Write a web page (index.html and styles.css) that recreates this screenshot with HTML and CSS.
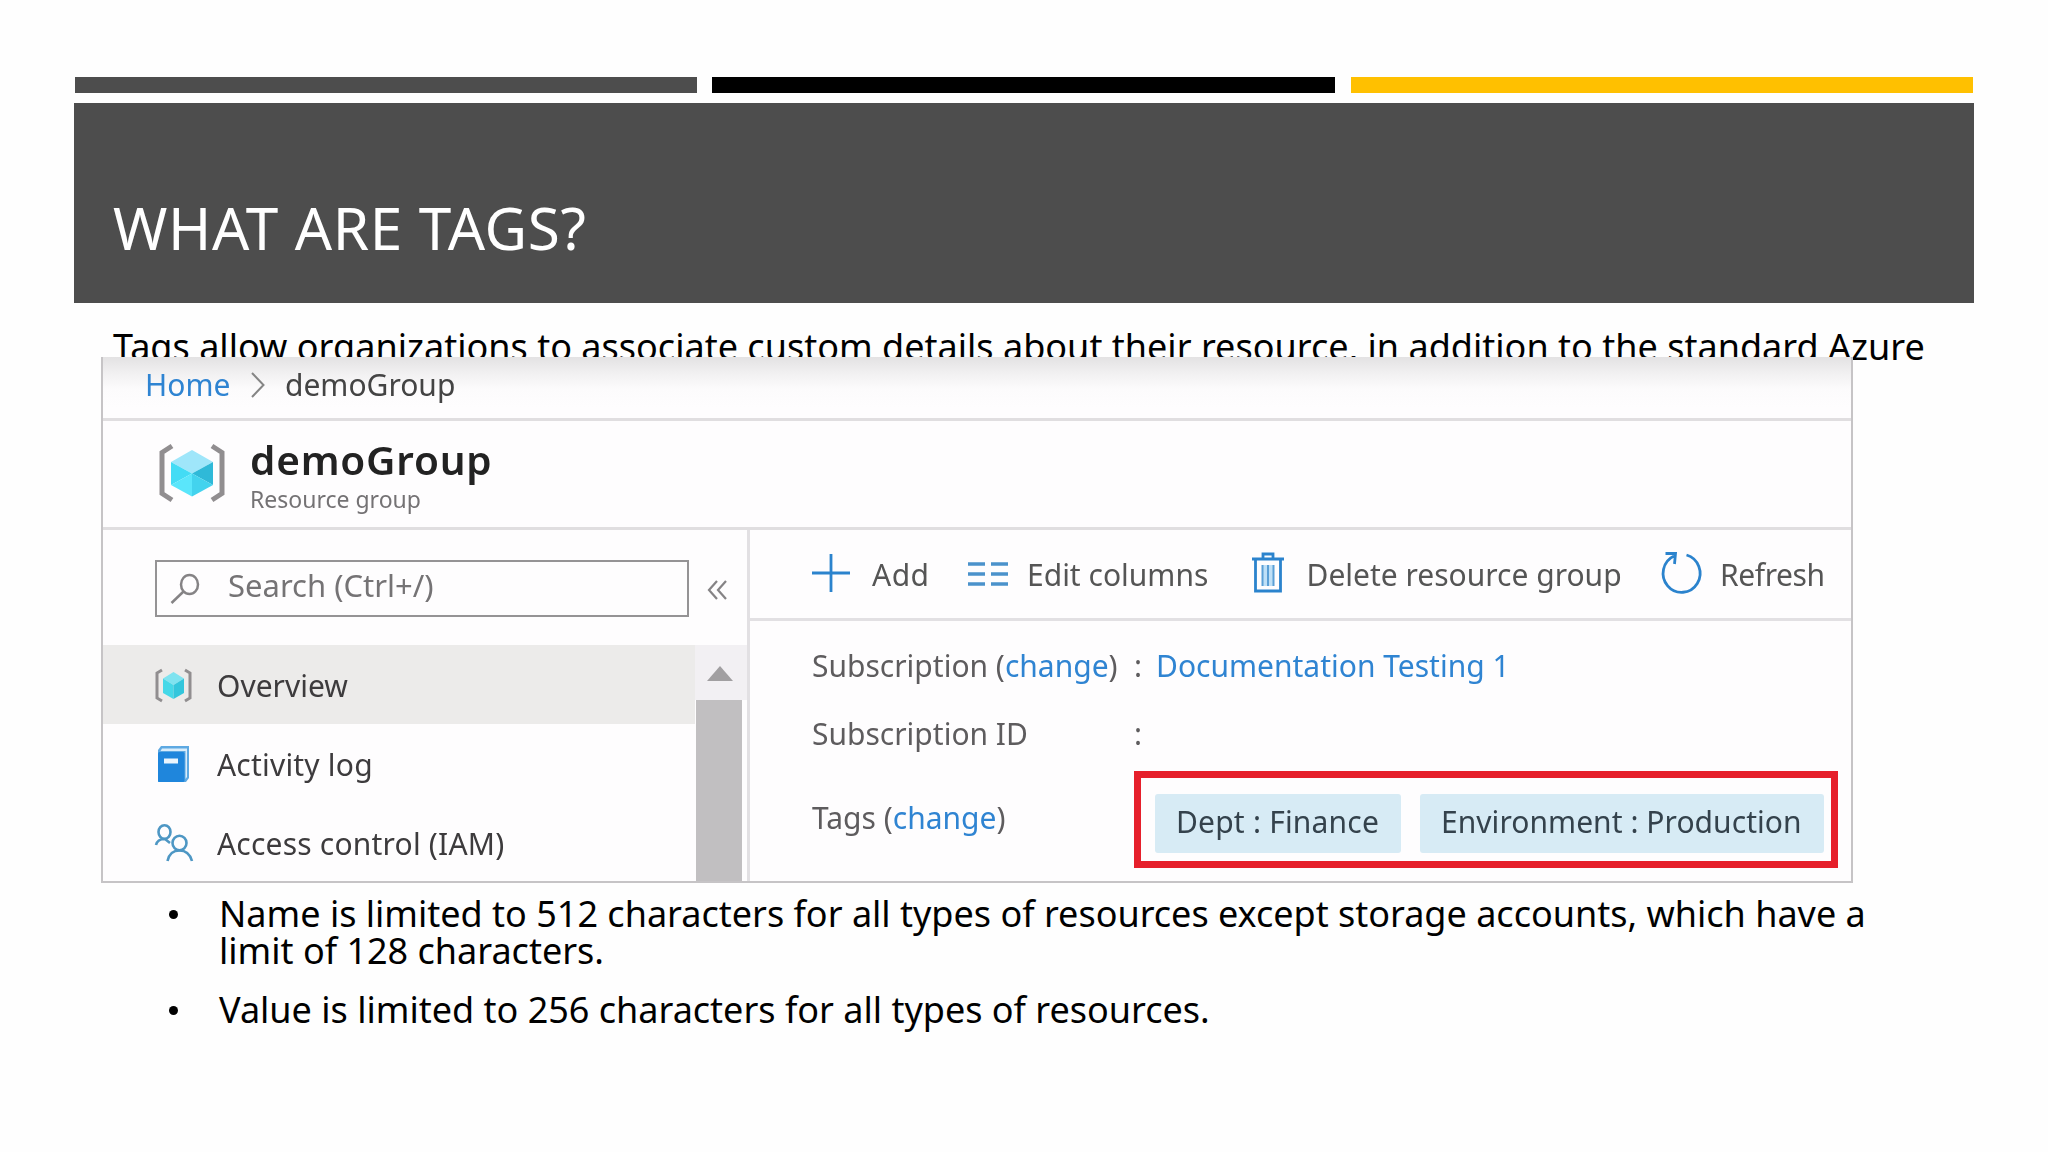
FILE: index.html
```html
<!DOCTYPE html>
<html lang="en">
<head>
<meta charset="utf-8">
<title>What are tags?</title>
<link rel="stylesheet" href="styles.css">
</head>
<body>
<main class="slide">
  <div class="bars"><span class="bar bar-gray"></span><span class="bar bar-black"></span><span class="bar bar-gold"></span></div>
  <header class="banner"><h1 class="title">WHAT ARE TAGS?</h1></header>
  <p class="intro">Tags allow organizations to associate custom details about their resource, in addition to the standard Azure</p>

  <section class="portal">
    <nav class="crumbs">
      <a class="link soft">Home</a>
      <svg class="chevron soft" viewBox="0 0 16 26"><path d="M2 1 13.500 13 2 25"/></svg>
      <span class="soft">demoGroup</span>
    </nav>

    <div class="heading">
      <svg class="group-icon soft" viewBox="0 0 68 60">
        <path class="bracket" d="M14 3 4 9.500V50.500L14 57M54 3 64 9.500V50.500L54 57"/>
        <path fill="#9fe6fa" d="M34 7 55 19 34 30.500 13 19Z"/>
        <path fill="#43dcf5" d="M13 19 34 30.500 13 42Z"/>
        <path fill="#2fb9d8" d="M55 19 34 30.500 55 42Z"/>
        <path fill="#5ae6fb" d="M13 42 34 30.500V53.500Z"/>
        <path fill="#43d3ee" d="M55 42 34 30.500V53.500Z"/>
      </svg>
      <div class="heading-text">
        <h2 class="name soft">demoGroup</h2>
        <div class="kind soft">Resource group</div>
      </div>
    </div>

    <div class="body">
      <aside class="side">
        <div class="search-row">
          <div class="search">
            <svg class="lens soft" viewBox="0 0 30 32"><ellipse cx="19.500" cy="11.500" rx="8.500" ry="9.500"/><path d="M13.500 18.500 1.500 30"/></svg>
            <span class="soft">Search (Ctrl+/)</span>
          </div>
          <svg class="collapse soft" viewBox="0 0 21 20"><path d="M10 1 2 10 10 19M19 1 11 10 19 19"/></svg>
        </div>
        <div class="menu">
          <div class="items">
            <div class="item active">
              <svg class="item-icon soft" viewBox="0 0 38 38">
                <path class="bracket thin" d="M7 3 2 6V31L7 34M30 3 35 6V31L30 34"/>
                <path fill="#7fe3f0" d="M18.500 5 29 11.500 18.500 18 8 11.500Z"/>
                <path fill="#45d8e8" d="M8 11.500 18.500 18V32L8 26Z"/>
                <path fill="#33c6dc" d="M29 11.500 18.500 18V32L29 26Z"/>
              </svg>
              <span class="soft">Overview</span>
            </div>
            <div class="item">
              <svg class="item-icon soft" viewBox="0 0 38 38">
                <path fill="#5ea9e2" d="M6 0H34V32L31 36H3V4Z"/>
                <path fill="#d9edfb" d="M7 2.500H32V31L30.500 33V5H5.500Z"/>
                <rect x="3" y="6" width="26.500" height="30" rx="1.500" fill="#1f86dc"/>
                <rect x="9" y="12.500" width="14" height="5" fill="#eaf5fd"/>
              </svg>
              <span class="soft">Activity log</span>
            </div>
            <div class="item">
              <svg class="item-icon soft" viewBox="0 0 38 38">
                <g class="people"><ellipse cx="9.500" cy="7" rx="6" ry="6.800"/><path d="M1 20C2 16 5 14 9.500 14M10 14 15 18"/><ellipse cx="24.500" cy="18" rx="7" ry="7.200"/><path d="M12.500 36C14 29 18 25.500 24.500 25.500S35 29 37 36"/></g>
              </svg>
              <span class="soft">Access control (IAM)</span>
            </div>
          </div>
          <div class="scroll"><svg class="up soft" viewBox="0 0 26 15"><path d="M13 0 26 15H0Z"/></svg><span class="thumb"></span></div>
        </div>
      </aside>

      <div class="main">
        <div class="toolbar">
          <div class="tool tool-add"><svg class="icon-add soft" viewBox="0 0 38 40"><path d="M19 1V39M0 20H38"/></svg><span class="soft">Add</span></div>
          <div class="tool tool-edit"><svg class="icon-cols soft" viewBox="0 0 42 26"><path d="M1 3H18M24 3H41M1 13H18M24 13H41M1 23H18M24 23H41"/></svg><span class="soft">Edit columns</span></div>
          <div class="tool tool-delete"><svg class="icon-trash soft" viewBox="0 0 32 42"><path fill="#bfe0f7" d="M10 13H22V34H10Z"/><path d="M0 7H32M3.500 7V39H28.500V7M11 6V2H21V6"/><path class="fine" d="M10.500 13V34M16 13V34M21.500 13V34"/></svg><span class="soft">Delete resource group</span></div>
          <div class="tool tool-refresh"><svg class="icon-refresh soft" viewBox="0 0 42 42"><path d="M26.500 3A18.500 19 0 1 1 14 4M5.500 1.500H15.500L14.500 12"/></svg><span class="soft">Refresh</span></div>
        </div>
        <div class="props">
          <div class="prop"><span class="label soft">Subscription (<a class="link">change</a>)</span><span class="soft">:</span><a class="link docs soft">Documentation Testing 1</a></div>
          <div class="prop"><span class="label soft">Subscription ID</span><span class="soft">:</span></div>
          <div class="prop-tags">
            <span class="label soft">Tags (<a class="link">change</a>)</span>
            <div class="tags"><span class="tag tag-dept"><span class="soft">Dept : Finance</span></span><span class="tag tag-env"><span class="soft">Environment : Production</span></span></div>
          </div>
        </div>
      </div>
    </div>
  </section>

  <ul class="limits">
    <li class="limit"><span>Name is limited to 512 characters for all types of resources except storage accounts, which have a<br>limit of 128 characters.</span></li>
    <li class="limit"><span>Value is limited to 256 characters for all types of resources.</span></li>
  </ul>
</main>
</body>
</html>
```
FILE: styles.css
```css
* { box-sizing: border-box; }
body { margin: 0; background: #fefefe; color: #000; font-family: "Noto Sans", sans-serif; }
.slide { width: 2048px; height: 1152px; padding: 77px 74px 0; overflow: hidden; }

.bars { display: grid; grid-template-columns: 622px 622px 622px; column-gap: 16px; margin-left: 1px; height: 16px; }
.bar-gray { background: #4d4d4d; }
.bar-black { background: #000; margin: 0 0 0 -1px; }
.bar-gold { background: #ffc000; }
.banner { margin-top: 10px; height: 200px; padding: 84px 0 0 39px; background: #4d4d4d; }
.title { margin: 0; color: #fff; font-size: 58.5px; font-weight: 400; line-height: 80px; letter-spacing: 0.6px; }
.intro { margin: 26px 0 0; padding-left: 39px; font-size: 36px; line-height: 36px; letter-spacing: 0.015px; white-space: nowrap; }

/* Portal window, laid over the lower half of the intro line */
.portal { position: relative; z-index: 1; width: 1752px; height: 526px; margin: -8px 0 0 27px; overflow: hidden;
  background: #fefdfe; border: solid #c6c4c6; border-width: 0 2px 2px; color: #555; font-size: 30px; line-height: 40px; white-space: nowrap; }
.soft { filter: blur(0.7px); }
.portal svg { fill: none; overflow: visible; }
.portal svg path[fill], .portal svg rect[fill] { stroke: none; }
.link { color: #2f84d2; }

.crumbs { display: grid; grid-template-columns: 105px 35px auto; align-items: start; height: 64px; padding: 8px 0 0 42px;
  color: #444; border-bottom: 3px solid #e0dee0;
  background: linear-gradient(#e3e2e3, #f1f0f1 16px, #fcfbfc 32px, #fefdfe 50px); }
.chevron { width: 16px; height: 26px; margin-top: 7px; stroke: #858585; stroke-width: 2; }

.heading { display: grid; grid-template-columns: 92px auto; height: 109px; padding: 15px 0 0 55px; border-bottom: 3px solid #e0dee0; }
.group-icon { width: 68px; height: 60px; margin-top: 7px; }
.bracket { stroke: #918e90; stroke-width: 5; }
.thin { stroke-width: 3; }
.name { margin: 0; color: #222; font-size: 40.500px; font-weight: 600; line-height: 48px; letter-spacing: 0.8px; }
.kind { margin-top: 1px; color: #747274; font-size: 23px; line-height: 28px; }

.body { display: flex; height: 351px; }
.side { width: 644px; padding-top: 30px; }
.search-row { display: flex; align-items: center; gap: 18px; padding-left: 52px; }
.search { display: grid; grid-template-columns: 58px auto; align-content: center; width: 534px; height: 57px;
  padding: 0 0 7px 13px; border: 2px solid #959395; color: #757375; font-size: 31px; }
.lens { width: 30px; height: 32px; align-self: center; margin-top: 7px; stroke: #858385; stroke-width: 2.500; }
.collapse { width: 21px; height: 20px; margin-top: 2px; stroke: #858385; stroke-width: 2.200; }
.menu { display: flex; height: 236px; margin-top: 28px; overflow: hidden; }
.items { width: 592px; color: #3d3b3d; }
.item { display: grid; grid-template-columns: 62px auto; align-items: center; height: 79.500px; padding: 3px 0 0 52px; letter-spacing: 0.2px; }
.active { height: 78.500px; background: #ecebea; letter-spacing: 0; }
.item-icon { width: 38px; height: 38px; }
.people { stroke: #4e97c4; stroke-width: 2.600; }
.scroll { display: flex; flex-direction: column; width: 52px; padding: 21px 5px 0 1px; background: linear-gradient(#f2f0f3 55px, #fefdfe 55px); }
.up { width: 26px; height: 15px; margin-left: 11px; }
.up path { fill: #a19fa1; }
.thumb { flex: 1; margin-top: 19px; background: #c1bfc1; }

.main { width: 1104px; border-left: 3px solid #e2e0e3; }
.toolbar { display: grid; grid-template-columns: 155px 285px 408px auto; height: 91px; padding: 2px 0 0 62px; border-bottom: 3px solid #e2e0e3; align-items: center; }
.tool { display: grid; align-items: center; }
.tool svg { margin-top: -4px; stroke: #2b83cd; stroke-width: 2.800; }
.tool-add { grid-template-columns: 60px auto; letter-spacing: 0.5px; }
.tool-edit { grid-template-columns: 60px auto; }
.tool-delete { grid-template-columns: 54.500px auto; }
.tool-refresh { grid-template-columns: 60px auto; letter-spacing: -0.4px; }
.icon-add { width: 38px; height: 40px; }
.tool .icon-cols { width: 42px; height: 26px; margin-top: -2px; stroke: #4b92cb; stroke-width: 3.500; }
.icon-trash { width: 32px; height: 42px; }
.tool .fine { stroke: #5a9fd6; stroke-width: 2; }
.icon-refresh { width: 42px; height: 42px; }

.props { padding: 25px 0 0 62px; color: #5e5c5e; }
.prop { display: grid; grid-template-columns: 322px 22px auto; height: 40px; margin-bottom: 28px; }
.docs { letter-spacing: 0; }
.prop-tags { display: grid; grid-template-columns: 322px 704px; align-items: center; margin-top: -11px; }
.prop-tags .label { margin-top: -3px; }
.tags { display: flex; gap: 19px; height: 97px; padding: 16px 0 0 14px; border: 7px solid #e61f2b; }
.tag { height: 59px; padding: 8px 0 0 21px; background: #d7ebf5; border-radius: 3px; color: #34424c; }
.tag-dept { width: 246px; letter-spacing: 0.2px; }
.tag-env { width: 404px; letter-spacing: 0.05px; }

.limits { margin: 11.500px 0 0 95px; padding: 0; list-style: none; font-size: 36px; line-height: 37px; white-space: nowrap; }
.limit { display: grid; grid-template-columns: 50px auto; margin-bottom: 22px; }
.limit::before { content: ""; width: 9px; height: 9px; margin-top: 15px; border-radius: 50%; background: #000; }
```
